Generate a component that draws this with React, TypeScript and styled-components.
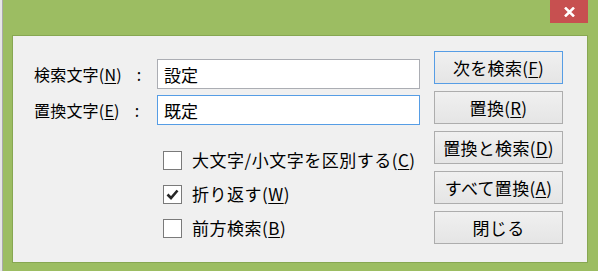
import React from "react";
import styled, { createGlobalStyle } from "styled-components";

const Global = createGlobalStyle`
  html, body { margin: 0; padding: 0; overflow: hidden; background: #f0f0f0; }
  body { font-family: "Noto Sans CJK JP", "Noto Sans", sans-serif; }
`;

const Desktop = styled.div`
  display: flex;
  width: 598px;
  height: 271px;
`;

const Backdrop = styled.div`
  width: 3px;
  background: #e6e6e6;
  border-right: 1px solid #a9a9a9;
`;

const Window = styled.div`
  flex: 1;
  display: flex;
  flex-direction: column;
  background: #9cbd62;
  padding: 0 10px 8px 9px;
`;

const TitleBar = styled.div`
  height: 35px;
  display: flex;
  justify-content: flex-end;
  align-items: flex-start;
`;

const CloseButton = styled.div`
  width: 38px;
  height: 23px;
  background: #c75050;
  display: flex;
  align-items: center;
  justify-content: center;
`;

const Client = styled.div`
  flex: 1;
  display: flex;
  background: #f0f0f0;
  border: 1px solid #87a752;
  color: #000;
  font-size: 16px;
  line-height: 20px;
`;

const FormColumn = styled.div`
  flex: 1;
  padding: 23px 0 0 21px;
  display: flex;
  flex-direction: column;
`;

const FieldRow = styled.div`
  display: flex;
  align-items: center;
  height: 30px;
  margin-bottom: 6px;
`;

const FieldLabel = styled.label`
  width: 123px;
  white-space: nowrap;
  letter-spacing: 0.2px;
`;

const Colon = styled.span`
  margin-left: 15px;
`;

const TextBox = styled.input<{ $focused?: boolean }>`
  width: 263px;
  height: 30px;
  box-sizing: border-box;
  border: 1px solid ${(p) => (p.$focused ? "#569de5" : "#abadb3")};
  background: #fff;
  padding: 0 6px;
  margin: 0;
  font: inherit;
  font-size: 17px;
  color: #000;
  outline: none;
`;

const Options = styled.div`
  margin: 12px 0 0 129px;
  display: flex;
  flex-direction: column;
`;

const CheckRow = styled.div`
  display: flex;
  align-items: center;
  gap: 10px;
  height: 34px;
  white-space: nowrap;
  font-size: 17px;
  letter-spacing: 0.5px;
`;

const Box = styled.div`
  width: 19px;
  height: 19px;
  box-sizing: border-box;
  border: 1px solid #7a7a7a;
  background: #fff;
  display: flex;
  align-items: center;
  justify-content: center;
`;

const ButtonColumn = styled.div`
  display: flex;
  flex-direction: column;
  gap: 7px;
  padding: 15px 24px 0 14px;
`;

const Button = styled.div<{ $default?: boolean }>`
  width: 129px;
  height: 33px;
  box-sizing: border-box;
  border: 1px solid ${(p) => (p.$default ? "#569de5" : "#adadad")};
  background: linear-gradient(#f0f0f0, #e5e5e5);
  display: flex;
  align-items: center;
  justify-content: center;
  white-space: nowrap;
  font-size: 17px;
  letter-spacing: 0.3px;
`;

const Key = styled.u`
  text-underline-offset: 2px;
  text-decoration-thickness: 1px;
`;

const Check = () => (
  <svg width="13" height="11" viewBox="0 0 13 11">
    <path d="M1.5 5.5 L5 9 L11.5 1.5" fill="none" stroke="#262626" strokeWidth="2.6" />
  </svg>
);

const CloseX = () => (
  <svg width="11" height="10" viewBox="0 0 11 10">
    <path d="M1 0.5 L10 9.5 M10 0.5 L1 9.5" stroke="#fff" strokeWidth="2.5" />
  </svg>
);

const opts = [
  { pre: "大文字/小文字を区別する(", key: "C", checked: false },
  { pre: "折り返す(", key: "W", checked: true },
  { pre: "前方検索(", key: "B", checked: false },
];

const buttons = [
  { pre: "次を検索(", key: "F", def: true },
  { pre: "置換(", key: "R" },
  { pre: "置換と検索(", key: "D" },
  { pre: "すべて置換(", key: "A" },
  { pre: "閉じる", key: "" },
];

export default function App() {
  return (
    <>
      <Global />
      <Desktop>
        <Backdrop />
        <Window>
          <TitleBar>
            <CloseButton>
              <CloseX />
            </CloseButton>
          </TitleBar>
          <Client>
            <FormColumn>
              <FieldRow>
                <FieldLabel>
                  検索文字(<Key>N</Key>)<Colon>:</Colon>
                </FieldLabel>
                <TextBox readOnly value="設定" />
              </FieldRow>
              <FieldRow>
                <FieldLabel>
                  置換文字(<Key>E</Key>)<Colon>:</Colon>
                </FieldLabel>
                <TextBox readOnly value="既定" $focused />
              </FieldRow>
              <Options>
                {opts.map((o) => (
                  <CheckRow key={o.key}>
                    <Box>{o.checked && <Check />}</Box>
                    <span>
                      {o.pre}
                      <Key>{o.key}</Key>)
                    </span>
                  </CheckRow>
                ))}
              </Options>
            </FormColumn>
            <ButtonColumn>
              {buttons.map((b) => (
                <Button key={b.pre} $default={b.def}>
                  {b.pre}
                  {b.key && (
                    <>
                      <Key>{b.key}</Key>)
                    </>
                  )}
                </Button>
              ))}
            </ButtonColumn>
          </Client>
        </Window>
      </Desktop>
    </>
  );
}
